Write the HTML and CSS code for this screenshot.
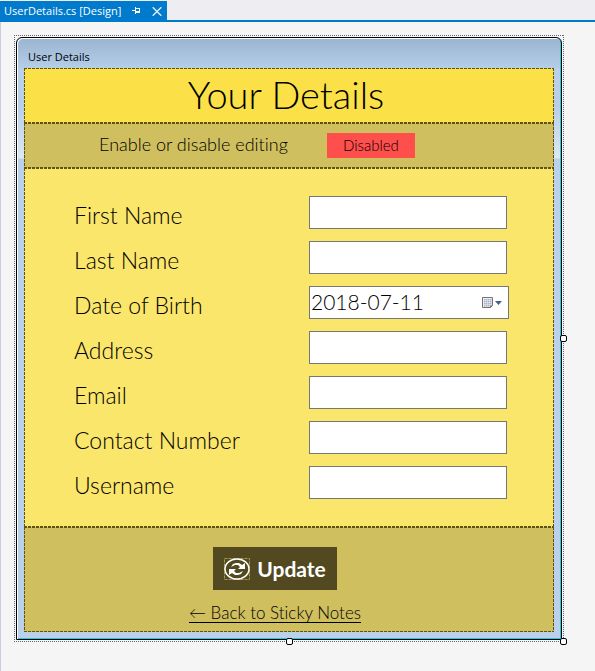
FILE: index.html
```html
<!DOCTYPE html>
<html lang="en">
<head>
<meta charset="utf-8">
<title>UserDetails.cs [Design]</title>
<link rel="stylesheet" href="styles.css">
</head>
<body>
<nav class="tabs">
  <div class="tab">
    <span class="tab-name">UserDetails.cs [Design]</span>
    <button class="tab-button" type="button" aria-label="Pin">
      <svg width="9" height="8" viewBox="0 0 9 8" shape-rendering="crispEdges"><path d="M0 3h3v1H0zM3 0h1v7H3zM4 1h4v1H4zM4 4h4v2H4zM7 1h1v5H7z" fill="#fff"/></svg>
    </button>
    <button class="tab-button" type="button" aria-label="Close">
      <svg width="10" height="9" viewBox="0 0 10 9"><path d="M.7.3l8.6 8.4M9.3.3L.7 8.7" stroke="#d8ecfa" stroke-width="1.5"/></svg>
    </button>
  </div>
</nav>
<main class="designer">
  <div class="selection">
    <section class="window">
      <h2 class="window-title">User Details</h2>
      <div class="content">
        <header class="panel heading"><h1>Your Details</h1></header>
        <div class="panel editing">
          <label for="editing" class="editing-label">Enable or disable editing</label>
          <button id="editing" class="toggle" type="button">Disabled</button>
        </div>
        <form class="panel fields">
          <label for="first">First Name</label><input id="first" type="text">
          <label for="last">Last Name</label><input id="last" type="text">
          <label for="birth">Date of Birth</label>
          <div class="date">
            <input id="birth" type="text" value="2018-07-11">
            <button class="date-button" type="button" aria-label="Choose date">
              <svg width="21" height="14" viewBox="0 0 21 14"><path d="M1.5 1.5h10v8l-2 2h-8z" fill="#eef0f5" stroke="#776e6e"/><path d="M3 3h1.500v1.500H3zM5 3h1.500v1.500H5zM7 3h1.500v1.500H7zM9 3h1.500v1.500H9zM3 5h1.500v1.500H3zM5 5h1.500v1.500H5zM7 5h1.500v1.500H7zM9 5h1.500v1.500H9zM3 7h1.500v1.500H3zM5 7h1.500v1.500H5zM7 7h1.500v1.500H7zM9 7h1.500v1.500H9zM3 9h1.500v1.500H3zM5 9h1.500v1.500H5zM7 9h1.500v1.500H7z" fill="#a9b2cc"/><path d="M9 12V9.500h3z" fill="#776e6e"/><path d="M14 5h7l-3.500 4z" fill="#46628c"/></svg>
            </button>
          </div>
          <label for="address">Address</label><input id="address" type="text">
          <label for="email">Email</label><input id="email" type="text">
          <label for="contact">Contact Number</label><input id="contact" type="text">
          <label for="username">Username</label><input id="username" type="text">
        </form>
        <footer class="panel actions">
          <button class="update" type="button">
            <svg width="26" height="22" viewBox="0 0 26 22"><rect x=".5" y=".5" width="25" height="21" fill="none" stroke="#a39952" stroke-dasharray="3 1"/><ellipse cx="13" cy="11" rx="12" ry="10" fill="none" stroke="#fff" stroke-width="1.500"/><path d="M7 9l2-3 3-1h3l3 2 3-2v6h-7l2-2-2-2h-3zM19 13l-2 3-3 1h-3l-3-2-3 2v-6h7l-2 2 2 2h3z" fill="#fff"/></svg>
            Update
          </button>
          <a class="back" href="#">← Back to Sticky Notes</a>
        </footer>
      </div>
    </section>
    <i class="handle right"></i>
    <i class="handle bottom"></i>
    <i class="handle corner"></i>
  </div>
</main>
</body>
</html>
```
FILE: styles.css
```css
* {
  box-sizing: border-box;
}

body {
  display: flex;
  flex-direction: column;
  min-height: 100vh;
  margin: 0;
  background: #f5f5f5;
  color: #000;
  font-family: "Century Gothic", Lato, sans-serif;
  font-weight: 300;
  font-variant-ligatures: none;
}

h1,
h2 {
  margin: 0;
  font-weight: inherit;
}

button,
input {
  margin: 0;
  border: 0;
  padding: 0;
  color: inherit;
  font: inherit;
}

svg {
  display: block;
}

.tabs {
  display: flex;
  height: 22px;
  padding-top: 1px;
  border-bottom: 2px solid #007acc;
  background: #eeeef2;
}

.tab {
  display: flex;
  align-items: center;
  gap: 11px;
  padding: 1px 5px 0 4px;
  background: #007acc;
  color: #fff;
  font: 11px/16px "Segoe UI", "Open Sans", sans-serif;
}

.tab-button {
  background: none;
}

.designer {
  flex: 1;
  padding: 13px 31px 29px 13px;
  border-left: 1px solid #ccccdc;
}

.selection {
  position: relative;
  padding: 2px;
  background:
    repeating-linear-gradient(90deg, #666 0 1px, transparent 1px 2px) top / 100% 1px no-repeat,
    repeating-linear-gradient(90deg, #666 0 1px, transparent 1px 2px) bottom / 100% 1px no-repeat,
    repeating-linear-gradient(#666 0 1px, transparent 1px 2px) left / 1px 100% no-repeat,
    repeating-linear-gradient(#666 0 1px, transparent 1px 2px) right / 1px 100% no-repeat;
}

.window {
  padding: 1px 7px 7px;
  border: 1px solid #000;
  border-radius: 6px 6px 0 0;
  background:
    linear-gradient(#9ab4d1, #b4cee9) top / 100% 30px no-repeat,
    linear-gradient(#b9d1ea 30px, #b9cfe9 70px, #dce8f4 120px, #b9d1ea 121px);
  box-shadow: inset 1px 1px #fff, inset -1px -1px #23cbe4;
}

.window-title {
  padding: 10px 4px 4px;
  font: 11px/15px "Segoe UI", "Open Sans", sans-serif;
}

.panel {
  background:
    repeating-linear-gradient(90deg, #5d5314 0 3px, transparent 3px 4px) top / 100% 1px no-repeat,
    repeating-linear-gradient(90deg, #5d5314 0 3px, transparent 3px 4px) bottom / 100% 1px no-repeat,
    repeating-linear-gradient(#5d5314 0 3px, transparent 3px 4px) left / 1px 100% no-repeat,
    repeating-linear-gradient(#5d5314 0 3px, transparent 3px 4px) right / 1px 100% no-repeat;
}

.heading {
  padding: 4px 6px 7px 0;
  background-color: #fbe147;
  text-align: center;
}

.heading h1 {
  font-size: 38px;
  line-height: 44px;
}

.editing {
  display: flex;
  align-items: center;
  padding: 10px 75px;
  background-color: #cfbf5f;
}

.editing-label {
  width: 228px;
  padding-bottom: 4px;
  font-size: 18px;
  line-height: 20px;
}

.toggle {
  padding: 0 16px;
  background: #ff4f4c;
  font-size: 15px;
  line-height: 25px;
}

.fields {
  display: grid;
  grid-template-columns: 235px minmax(0, 1fr);
  gap: 12px 0;
  padding: 28px 47px 28px 50px;
  background-color: #fbe66c;
}

.fields label {
  padding-top: 6px;
  font-size: 23px;
  line-height: 26px;
}

.fields input {
  width: 100%;
  height: 33px;
  border: 1px solid #777;
  padding: 0 2px;
  background: #fff;
  font-size: 23px;
}

.date {
  display: flex;
  align-items: center;
  height: 33px;
  margin-right: -2px;
  border: 1px solid #777;
  background: #fff;
}

.fields .date input {
  flex: 1;
  min-width: 0;
  height: 29px;
  margin-bottom: 2px;
  border: 0;
  padding: 0 1px;
  font-size: 21px;
}

.date-button {
  padding-right: 6px;
  background: none;
}

.actions {
  display: flex;
  flex-direction: column;
  align-items: center;
  gap: 12px;
  padding: 20px 28px 8px 0;
  background-color: #cfbf5f;
}

.update {
  display: flex;
  align-items: center;
  gap: 7px;
  padding: 0 11px;
  background: #524920;
  color: #fff;
  font-size: 21px;
  font-weight: 700;
  line-height: 43px;
}

.back {
  color: inherit;
  font-size: 17px;
  line-height: 22px;
  text-decoration-thickness: 1px;
  text-underline-offset: 3px;
}

.handle {
  position: absolute;
  width: 7px;
  height: 7px;
  border: 1px solid #000;
  border-radius: 2px;
  background: #fff;
}

.right {
  top: calc(50% - 4px);
  right: -3px;
}

.bottom {
  bottom: -3px;
  left: calc(50% - 3px);
}

.corner {
  right: -3px;
  bottom: -3px;
}
```
